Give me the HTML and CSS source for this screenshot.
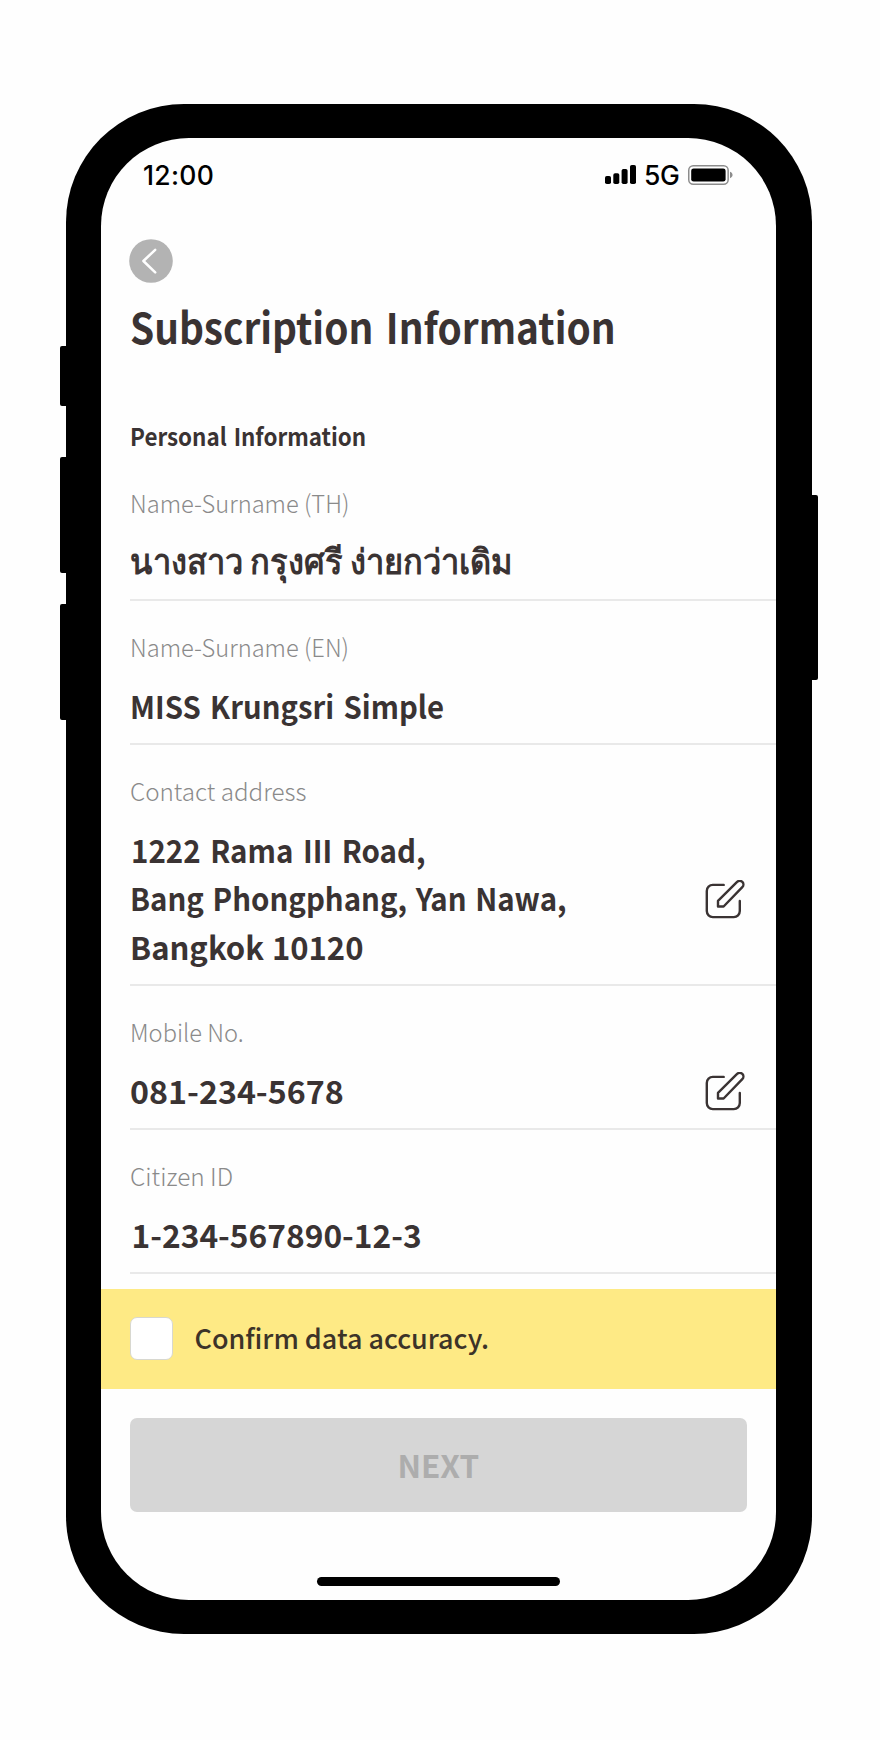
FILE: index.html
```html
<!DOCTYPE html>
<html lang="en">
<head>
<meta charset="utf-8">
<title>Subscription Information</title>
<link rel="stylesheet" href="styles.css">
</head>
<body>
<div class="phone">
  <i class="key key-mute"></i>
  <i class="key key-up"></i>
  <i class="key key-down"></i>
  <i class="key key-power"></i>
  <main class="screen">
    <div class="status">
      <span class="clock">12:00</span>
      <span class="indicators">
        <svg class="signal" width="31" height="19" viewBox="0 0 31 19">
          <rect x="0" y="11" width="6" height="8" rx="1.8"/>
          <rect x="8.3" y="8.2" width="6" height="10.8" rx="1.8"/>
          <rect x="16.6" y="4" width="6" height="15" rx="1.8"/>
          <rect x="25" y="0" width="6" height="19" rx="1.8"/>
        </svg>
        <span class="network">5G</span>
        <svg class="battery" width="45" height="20" viewBox="0 0 45 20">
          <rect x=".75" y=".75" width="39.4" height="18.5" rx="4.5" fill="none" stroke="#8c8c8c" stroke-width="1.5"/>
          <rect x="3.2" y="3.4" width="34.4" height="13.2" rx="2.4"/>
          <path d="M42 6.8c3.4 1.2 3.4 5.4 0 6.4z" fill="#8c8c8c"/>
        </svg>
      </span>
    </div>

    <button class="back" aria-label="Back">
      <svg width="44" height="44" viewBox="0 0 44 44">
        <circle cx="22" cy="22" r="21.8" fill="#b3b3b3"/>
        <path d="M26.2 10.8 14.4 22l11.8 11.4" fill="none" stroke="#fff" stroke-width="2.5" stroke-linecap="round" stroke-linejoin="round"/>
      </svg>
    </button>
    <h1 class="title"><span class="fit-title">Subscription Information</span></h1>
    <h2 class="section"><span class="fit-section">Personal Information</span></h2>

    <div class="field">
      <div class="label"><span class="fit-label">Name-Surname (TH)</span></div>
      <div class="value thai" lang="th"><span class="fit-thai">นางสาว กรุงศรี ง่ายกว่าเดิม</span></div>
    </div>
    <div class="field">
      <div class="label"><span class="fit-label">Name-Surname (EN)</span></div>
      <div class="value"><span class="fit-name">MISS Krungsri Simple</span></div>
    </div>
    <div class="field">
      <div class="label"><span class="fit-contact">Contact address</span></div>
      <div class="value">
        <div>
          <div class="line"><span class="fit-road">1222 Rama III Road,</span></div>
          <div class="line"><span class="fit-district">Bang Phongphang, Yan Nawa,</span></div>
          <div class="line"><span class="fit-city">Bangkok 10120</span></div>
        </div>
        <svg class="edit" width="40" height="40" viewBox="0 0 40 40"><path d="M18.7 4.9H7.8a6 6 0 0 0-6 6v20.2a6 6 0 0 0 6 6h21a6 6 0 0 0 6-6V21M13 26.5v-5.7L32.1 1.9a3.7 3.7 0 0 1 5.2 5.3L18.6 26.5z"/></svg>
      </div>
    </div>
    <div class="field">
      <div class="label"><span class="fit-label">Mobile No.</span></div>
      <div class="value"><span class="fit-mobile">081-234-5678</span>
        <svg class="edit" width="40" height="40" viewBox="0 0 40 40"><path d="M18.7 4.9H7.8a6 6 0 0 0-6 6v20.2a6 6 0 0 0 6 6h21a6 6 0 0 0 6-6V21M13 26.5v-5.7L32.1 1.9a3.7 3.7 0 0 1 5.2 5.3L18.6 26.5z"/></svg>
      </div>
    </div>
    <div class="field">
      <div class="label"><span class="fit-citizen">Citizen ID</span></div>
      <div class="value"><span class="fit-id">1-234-567890-12-3</span></div>
    </div>

    <label class="confirm">
      <span class="box"></span>
      <span class="fit-confirm">Confirm data accuracy.</span>
    </label>
    <button class="next">NEXT</button>
    <div class="home"></div>
  </main>
</div>
</body>
</html>
```
FILE: styles.css
```css
* { box-sizing: border-box; }
html { background: #fefefe; }
body {
  margin: 0;
  padding: 104.3px 0 0 66px;
  font-family: "Noto Sans CJK JP", "Noto Sans", sans-serif;
  color: #3a3333;
}
button { border: 0; padding: 0; font: inherit; background: none; }

.phone {
  position: relative;
  width: 745.5px;
  height: 1530px;
  padding: 34.2px 35.3px 34px 35px;
  border-radius: 118px;
  background: #000;
}
.key { position: absolute; left: -6.5px; width: 12px; border-radius: 2px; background: #000; }
.key-mute { top: 241.5px; height: 60px; }
.key-up { top: 352.5px; height: 116.5px; }
.key-down { top: 499.5px; height: 116.5px; }
.key-power { left: auto; right: -6.5px; top: 390.5px; height: 185px; }

.screen {
  display: flex;
  flex-direction: column;
  height: 100%;
  border-radius: 88px;
  overflow: hidden;
  background: #fefefe;
}
.status {
  display: flex;
  justify-content: space-between;
  align-items: center;
  height: 32px;
  margin-top: 20.5px;
  padding: 0 43px 0 42px;
  color: #000;
  font: 450 26.5px/32px Inter, sans-serif;
}
.clock { letter-spacing: 0.3px; }
.indicators { display: flex; align-items: center; }
.network { margin: 0 8.5px 0 8px; letter-spacing: -0.2px; }

.back { display: flex; width: 44px; height: 44px; margin: 48.2px 0 0 28.3px; }
.title, .section { margin: 0 0 0 29px; white-space: nowrap; font-weight: 700; }
.title { margin-top: 16.3px; font-size: 42px; line-height: 54px; }
.section { margin-top: 68px; font-size: 24.5px; line-height: 30px; }

.title span, .section span, .label span, .value span, .confirm .fit-confirm {
  display: inline-block;
  transform-origin: left;
  white-space: nowrap;
}
.fit-title { word-spacing: 4px; transform: scaleX(.924); }
.fit-section { word-spacing: 2px; transform: scaleX(.914); }
.fit-label { transform: scaleX(.965); }
.fit-name { word-spacing: 3px; transform: scaleX(.93); }
.fit-district { word-spacing: 2px; transform: scaleX(.935); }
.fit-road { word-spacing: 3px; transform: translateX(1px) scaleX(.937); }
.fit-contact { transform: scaleX(.987); }
.fit-city { word-spacing: 1px; transform: scaleX(.985); }
.fit-mobile { transform: scaleX(1.022); }
.fit-id { transform: translateX(1.5px) scaleX(1.007); }
.fit-citizen { transform: scaleX(.995); }
.fit-thai { transform: translateY(-2.5px) scaleX(.946); }
.fit-confirm { transform: translate(.5px, -2.5px) scaleX(.98); }

.field {
  margin-left: 28.5px;
  padding: 30.5px 0 13.7px;
  border-bottom: 2px solid #e9e9e9;
}
.section + .field { margin-top: 5.9px; }
.label { height: 30px; font-size: 24.5px; line-height: 30px; font-weight: 300; color: #8a8a8a; }
.value {
  display: flex;
  align-items: center;
  justify-content: space-between;
  margin-top: 19px;
  padding-right: 31.5px;
  font-size: 31.5px;
  line-height: 48.7px;
  font-weight: 700;
}
.thai { height: 48.7px; font-size: 34.5px; }
.line { height: 48.7px; }
.edit { flex: none; margin-top: 4px; fill: none; stroke: #3a3333; stroke-width: 2.4; stroke-linecap: round; stroke-linejoin: round; }

.confirm {
  display: flex;
  flex: none;
  align-items: center;
  height: 100.5px;
  margin-top: 14.5px;
  padding-left: 28.5px;
  gap: 21.5px;
  background: #feea85;
  color: #3c3328;
  font-size: 27.5px;
  font-weight: 500;
}
.box { width: 43px; height: 43px; border: 1.5px solid #d8d8d0; border-radius: 7px; background: #fff; }
.next {
  flex: none;
  width: 617.5px;
  height: 93.5px;
  margin: 29.2px 0 0 28.5px;
  padding-bottom: 3px;
  border-radius: 7px;
  background: #d6d6d6;
  color: #adadad;
  font-size: 31.5px;
  line-height: 90px;
  font-weight: 700;
}
.home { flex: none; width: 243px; height: 9px; margin: 65px 0 0 216px; border-radius: 5px; background: #000; }
```
